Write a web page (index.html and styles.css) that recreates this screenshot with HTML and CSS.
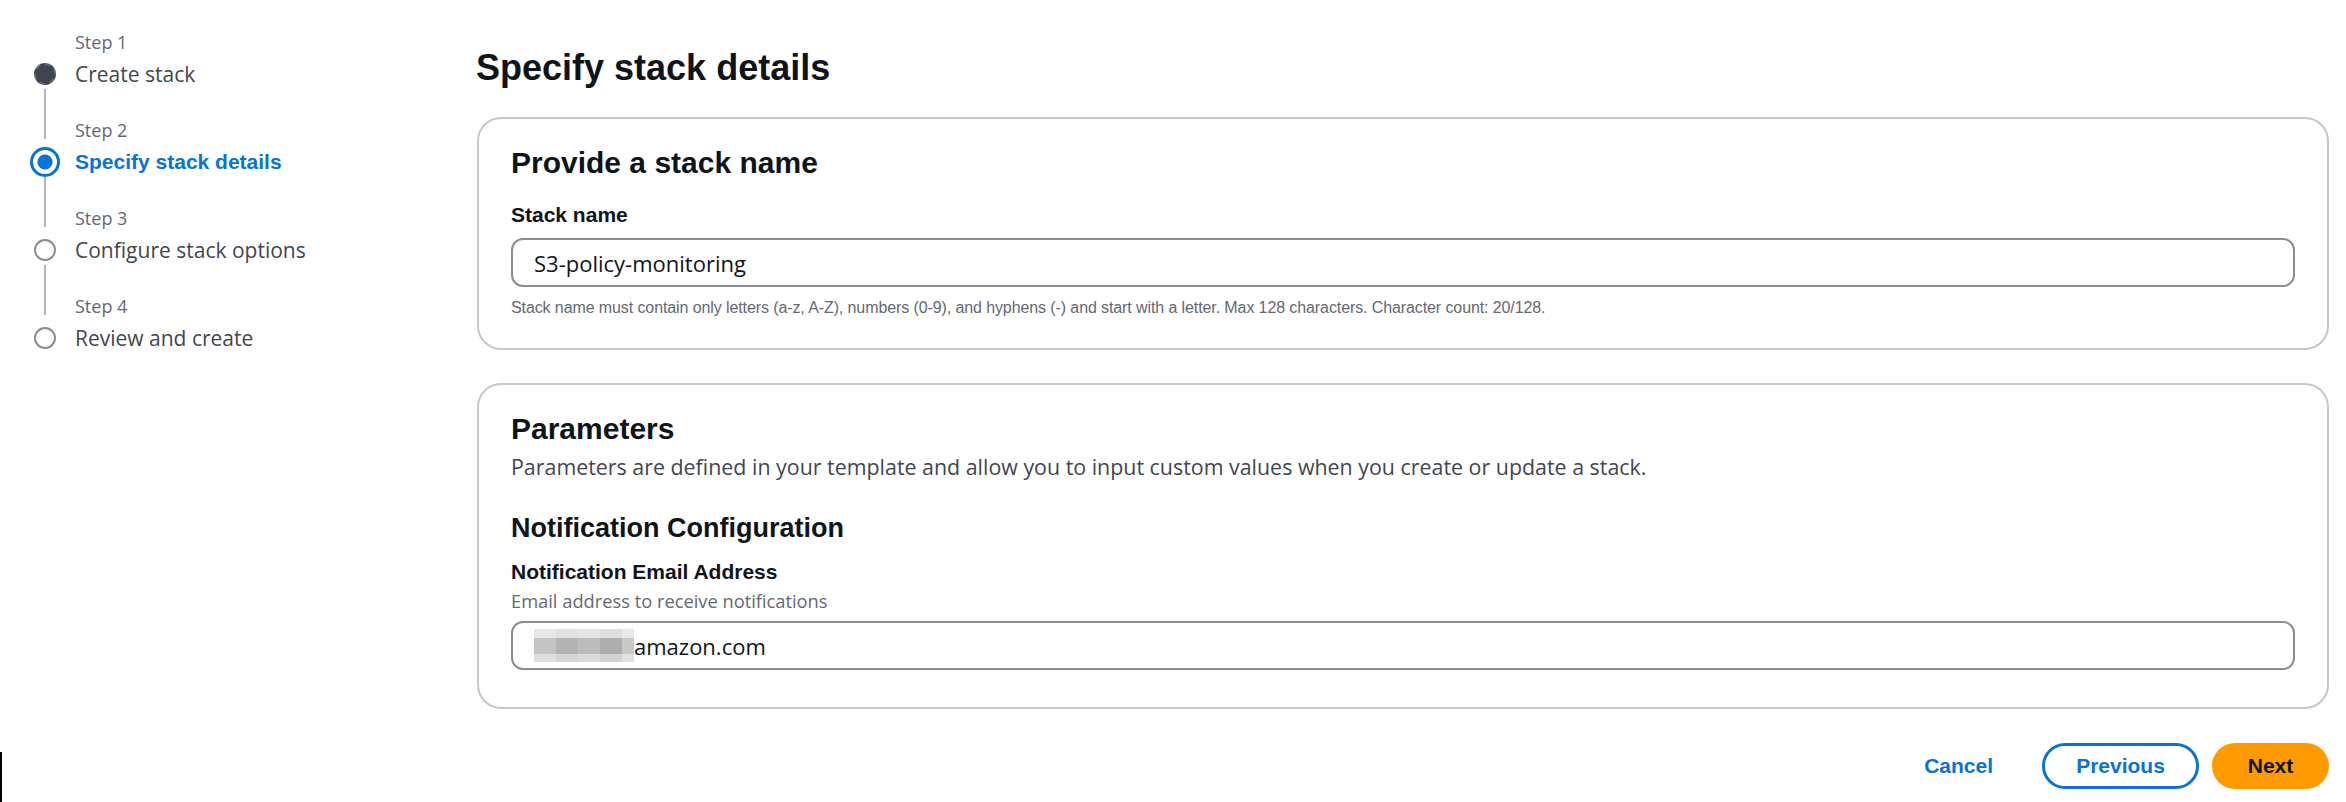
FILE: index.html
```html
<!doctype html>
<html>
<head>
    <meta charset="UTF-8">
    <title>Specify stack details</title>
    <link rel="stylesheet" href="styles.css">
</head>
<body>
<div class="page">
    <nav class="wizardNav">
        <ol class="steps">
            <li class="step done">
                <span class="rail top"></span>
                <span class="stepLabel">Step 1</span>
                <span class="dot"></span>
                <span class="stepTitle">Create stack</span>
                <span class="rail bottom"></span>
            </li>
            <li class="step active">
                <span class="rail top"></span>
                <span class="stepLabel">Step 2</span>
                <span class="dot"></span>
                <span class="stepTitle">Specify stack details</span>
                <span class="rail bottom"></span>
            </li>
            <li class="step">
                <span class="rail top"></span>
                <span class="stepLabel">Step 3</span>
                <span class="dot"></span>
                <span class="stepTitle">Configure stack options</span>
                <span class="rail bottom"></span>
            </li>
            <li class="step last">
                <span class="rail top"></span>
                <span class="stepLabel">Step 4</span>
                <span class="dot"></span>
                <span class="stepTitle">Review and create</span>
                <span class="rail bottom"></span>
            </li>
        </ol>
        <div class="edgeMark"></div>
    </nav>

    <main class="content">
        <h1 class="pageTitle">Specify stack details</h1>

        <section class="box nameBox">
            <h2 class="boxTitle">Provide a stack name</h2>
            <label class="fieldLabel" for="stackName">Stack name</label>
            <div class="input" id="stackName">S3-policy-monitoring</div>
            <p class="hint">Stack name must contain only letters (a-z, A-Z), numbers (0-9), and hyphens (-) and start with a letter. Max 128 characters. Character count: 20/128.</p>
        </section>

        <section class="box paramBox">
            <h2 class="boxTitle">Parameters</h2>
            <p class="boxDesc">Parameters are defined in your template and allow you to input custom values when you create or update a stack.</p>
            <h3 class="groupTitle">Notification Configuration</h3>
            <label class="fieldLabel" for="email">Notification Email Address</label>
            <p class="fieldDesc">Email address to receive notifications</p>
            <div class="input" id="email"><span class="blur"></span>amazon.com</div>
        </section>

        <div class="actions">
            <button class="btn link">Cancel</button>
            <button class="btn normal">Previous</button>
            <button class="btn primary">Next</button>
        </div>
    </main>
</div>
</body>
</html>
```

FILE: styles.css
```css
body {
    margin: 0;
    background: #fff;
    color: #0f141a;
    font-family: "Open Sans", Arial, sans-serif;
}

.page {
    display: grid;
    grid-template-columns: 477px 1fr;
    min-height: 802px;
    padding-right: 17px;
}

/* left wizard navigation */

.wizardNav {
    display: flex;
    flex-direction: column;
}

.steps {
    list-style: none;
    margin: 0;
    padding: 28px 0 0 30px;
}

.step {
    display: grid;
    grid-template-columns: 30px 1fr;
    grid-template-rows: 28px 36px 24px;
    column-gap: 15px;
}

.rail {
    justify-self: center;
    width: 2px;
    background: #b4b4bb;
}

.rail.top {
    grid-column: 1;
    grid-row: 1;
    margin-bottom: 5px;
}

.rail.bottom {
    grid-column: 1;
    grid-row: 3;
    margin-top: -3px;
}

.step:first-child .rail.top,
.step.last .rail.bottom {
    visibility: hidden;
}

.stepLabel {
    grid-column: 2;
    grid-row: 1;
    font-size: 18px;
    line-height: 28px;
    color: #656871;
}

.dot {
    grid-column: 1;
    grid-row: 2;
    align-self: center;
    justify-self: center;
    box-sizing: border-box;
    width: 22px;
    height: 22px;
    border-radius: 50%;
    border: 2px solid #8c8c94;
    background: #fff;
}

.done .dot {
    border: 2px dashed #5f6570;
    background: #3f4450;
}

.active .dot {
    width: 30px;
    height: 30px;
    border: 3px solid #0972d3;
    background: radial-gradient(circle, #0972d3 0 7px, #fff 8px);
}

.stepTitle {
    grid-column: 2;
    grid-row: 2;
    font-size: 21px;
    line-height: 36px;
    color: #424650;
}

.active .stepTitle {
    color: #0972d3;
    font-family: "Liberation Sans", Arial, sans-serif;
    font-weight: bold;
}

.edgeMark {
    margin-top: auto;
    width: 2px;
    height: 50px;
    background: #000;
}

/* main column */

.content {
    padding-top: 46px;
}

.pageTitle {
    margin: 0 0 27px -1px;
    font-family: "Liberation Sans", Arial, sans-serif;
    font-size: 36px;
    line-height: 44px;
}

.box {
    border: 2px solid #c6c6cd;
    border-radius: 24px;
    padding: 26px 32px 28px;
    display: flex;
    flex-direction: column;
}

.paramBox {
    margin-top: 33px;
    padding-bottom: 37px;
}

.boxTitle {
    margin: 0;
    font-family: "Liberation Sans", Arial, sans-serif;
    font-size: 30px;
    line-height: 36px;
}

.fieldLabel {
    font-family: "Liberation Sans", Arial, sans-serif;
    font-weight: bold;
    font-size: 21px;
    line-height: 28px;
}

.nameBox .fieldLabel {
    margin-top: 20px;
}

.input {
    box-sizing: border-box;
    height: 49px;
    margin-top: 9px;
    padding: 0 21px;
    border: 2px solid #8c8c94;
    border-radius: 12px;
    display: flex;
    align-items: center;
    font-size: 22px;
    color: #0f141a;
}

.hint {
    margin: 9px 0 0;
    font-family: "Liberation Sans", Arial, sans-serif;
    font-size: 16px;
    letter-spacing: -0.1px;
    line-height: 24px;
    color: #656871;
}

.boxDesc {
    margin: 6px 0 0;
    font-size: 21.4px;
    line-height: 28px;
    color: #424650;
}

.groupTitle {
    margin: 30px 0 0;
    font-family: "Liberation Sans", Arial, sans-serif;
    font-size: 27px;
    line-height: 34px;
}

.paramBox .fieldLabel {
    margin-top: 13px;
}

.fieldDesc {
    margin: 3px 0 0;
    font-size: 18.3px;
    line-height: 24px;
    color: #656871;
}

.paramBox .input {
    margin-top: 8px;
}

.blur {
    display: inline-block;
    width: 100px;
    height: 33px;
    background:
        linear-gradient(180deg, rgba(255, 255, 255, 0.6) 0 9px, transparent 9px 25px, rgba(255, 255, 255, 0.45) 25px),
        linear-gradient(90deg, #c4c4c4 0 22px, #b3b3b3 22px 44px, #bcbcbc 44px 66px, #adadad 66px 88px, #c8c8c8 88px 100px);
}

/* footer buttons */

.actions {
    display: flex;
    justify-content: flex-end;
    align-items: center;
    gap: 13px;
    margin-top: 34px;
}

.btn {
    box-sizing: border-box;
    height: 46px;
    border-radius: 23px;
    font-family: "Liberation Sans", Arial, sans-serif;
    font-weight: bold;
    font-size: 21px;
    cursor: pointer;
}

.btn.link {
    border: none;
    background: none;
    color: #0972d3;
    padding: 0 24px;
    margin-right: 12px;
}

.btn.normal {
    width: 157px;
    border: 3px solid #0972d3;
    background: #fff;
    color: #0972d3;
}

.btn.primary {
    width: 117px;
    border: none;
    background: #ff9900;
    color: #0f141a;
}
```
